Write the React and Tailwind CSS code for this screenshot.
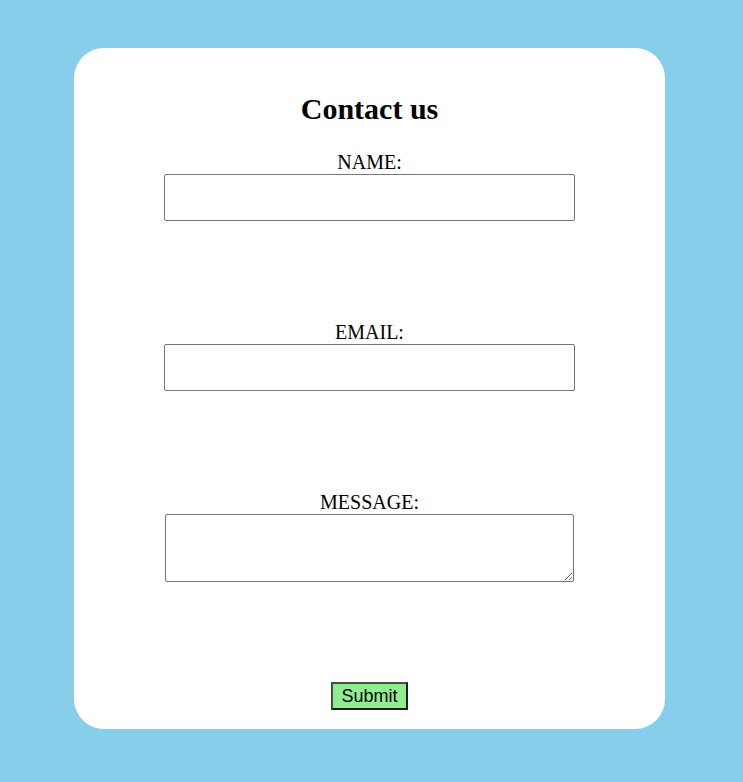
import React, { useState } from "react";

const App = () => {
  const [form, setForm] = useState({ name: "", email: "", message: "" });

  const handleChange = (e) => {
    const { name, value } = e.target;
    setForm((prev) => ({ ...prev, [name]: value }));
  };

  const handleSubmit = (e) => {
    e.preventDefault();
  };

  return (
    <div className="min-h-screen bg-[#87CEEB] pt-[48px] pb-[53px] font-['Liberation_Serif',serif] text-black">
      <form
        onSubmit={handleSubmit}
        className="ml-[74px] w-[591px] bg-white rounded-[30px] flex flex-col items-center pb-[19px]"
      >
        <h1 className="mt-[44px] h-[34px] text-[30px] leading-[34px] font-bold">
          Contact us
        </h1>

        <label htmlFor="name" className="mt-[25px] text-[20px] leading-[23px]">
          NAME:
        </label>
        <input
          id="name"
          type="text"
          name="name"
          value={form.name}
          onChange={handleChange}
          className="w-[411px] h-[47px] border border-[#767676] rounded-[2px] px-1 outline-none"
        />

        <label htmlFor="email" className="mt-[100px] text-[20px] leading-[23px]">
          EMAIL:
        </label>
        <input
          id="email"
          type="email"
          name="email"
          value={form.email}
          onChange={handleChange}
          className="w-[411px] h-[47px] border border-[#767676] rounded-[2px] px-1 outline-none"
        />

        <label htmlFor="message" className="mt-[100px] text-[20px] leading-[23px]">
          MESSAGE:
        </label>
        <textarea
          id="message"
          name="message"
          value={form.message}
          onChange={handleChange}
          className="block w-[409px] h-[68px] border border-[#767676] rounded-[2px] px-1 outline-none resize"
        />

        <button
          type="submit"
          className="mt-[100px] h-[28px] px-[8px] bg-[#90EE90] border-2 border-t-[#4a4a4a] border-l-[#4a4a4a] border-b-[#1f1f1f] border-r-[#1f1f1f] font-['Liberation_Sans',Arial,sans-serif] text-[18px] leading-[21px]"
        >
          Submit
        </button>
      </form>
    </div>
  );
};

export default App;
